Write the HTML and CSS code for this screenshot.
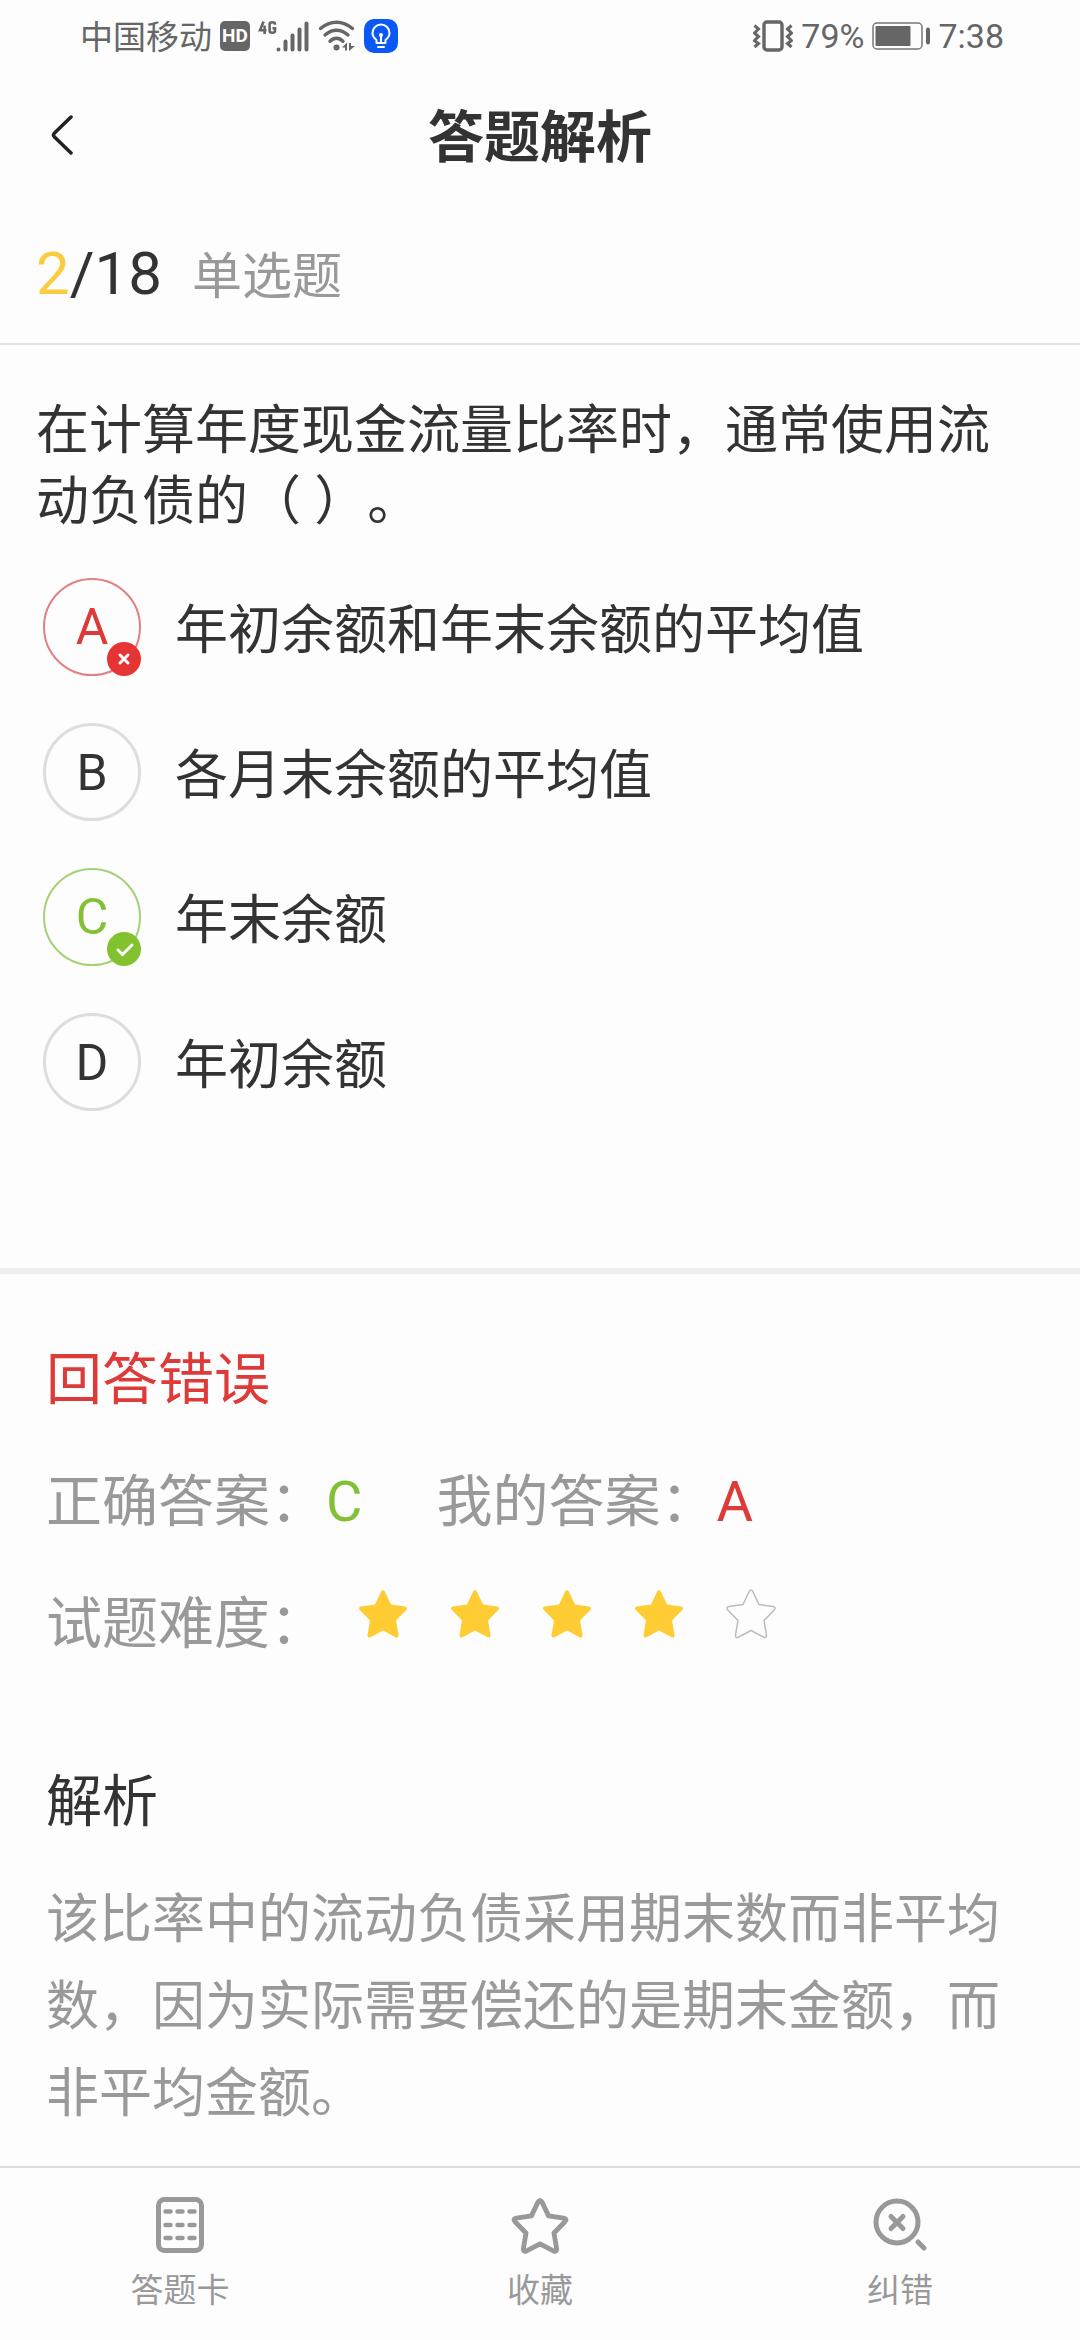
FILE: index.html
```html
<!DOCTYPE html>
<html lang="zh-CN">
<head>
<meta charset="utf-8">
<meta name="viewport" content="width=device-width, initial-scale=1">
<title>答题解析</title>
<link rel="stylesheet" href="styles.css">
</head>
<body>
<div class="app">
  <div class="status">
    <div class="status-group">
      <span class="carrier">中国移动</span>
      <span class="hd">HD</span>
      <svg class="signal" width="52" height="34" viewBox="0 0 52 34" aria-hidden="true">
        <g fill="none" stroke="#666" stroke-width="2.6">
          <path d="M5.6 2.5 2 11.3h6.5M6.6 6.500v8.500"/>
          <path d="M17 5.800V5q0-1.700-2.700-1.700T11.600 5v7q0 1.700 2.700 1.700T17 12V9.300h-2.500"/>
        </g>
        <g stroke="#666" stroke-width="4" stroke-linecap="round">
          <path d="M20.500 30.500v0M27.500 30.500v-8M34.500 30.500v-14M41.500 30.500v-20M48.500 30.500v-26"/>
        </g>
      </svg>
      <svg class="wifi" width="38" height="34" viewBox="0 0 38 34" aria-hidden="true">
        <g fill="none" stroke="#666" stroke-width="3.400" stroke-linecap="round">
          <path d="M2.500 9.500Q10 3.200 18.500 3.200T34.500 9.500"/>
          <path d="M7 16q5.500-4.800 11.500-4.800T30 16"/>
          <path d="M12 22.200q3-3 6.500-3t6.500 3"/>
        </g>
        <circle cx="18.500" cy="28.500" r="3" fill="#666"/>
        <path d="M24 28.500l5-5v8h-2v-3zM31 24v8l6-5h-4v-3z" fill="#666"/>
      </svg>
      <svg class="bulb" width="34" height="34" viewBox="0 0 34 34" aria-hidden="true">
        <rect width="34" height="34" rx="10" fill="#0a59f7"/>
        <g fill="none" stroke="#fff" stroke-width="2" stroke-linecap="round" stroke-linejoin="round">
          <path d="M12.500 24v-3q-4-3-4-7a8.500 8.500 0 0 1 17 0q0 4-4 7v3z"/>
          <path d="M17 24v-7M14 28h6"/>
        </g>
        <circle cx="17" cy="16" r="2" fill="#fff"/>
      </svg>
    </div>
    <div class="status-group">
      <svg class="vibrate" width="40" height="32" viewBox="0 0 40 32" aria-hidden="true">
        <g fill="none" stroke="#666">
          <rect x="11" y="2" width="18" height="28" rx="3" stroke-width="3.400"/>
          <path d="M1.500 5.500l4 3.500-4 4 4 3.500-4 4 4 3-4 3.500M38.500 5.500l-4 3.500 4 4-4 3.500 4 4-4 3 4 3.500" stroke-width="3"/>
        </g>
      </svg>
      <span class="percent">79%</span>
      <svg class="battery" width="58" height="28" viewBox="0 0 58 28" aria-hidden="true">
        <rect x="1" y="1" width="49" height="26" rx="4" fill="none" stroke="#777" stroke-width="1.500"/>
        <rect x="3.500" y="4" width="35" height="20" rx="1" fill="#666"/>
        <rect x="54" y="5.500" width="4" height="17" rx="2" fill="#666"/>
      </svg>
      <span class="clock">7:38</span>
    </div>
  </div>

  <header class="header">
    <button class="back" type="button" aria-label="返回">
      <svg width="24" height="40" viewBox="0 0 24 40" aria-hidden="true">
        <path d="M21 2 4.500 18q-2 2 0 4L21 38" fill="none" stroke="#222" stroke-width="3.500" stroke-linecap="round"/>
      </svg>
    </button>
    <h1 class="title">答题解析</h1>
  </header>

  <div class="progress">
    <span class="count"><span class="current">2</span>/18</span>
    <span class="kind">单选题</span>
  </div>

  <main class="content">
    <section class="question">
      <p class="stem">在计算年度现金流量比率时，通常使用流动负债的（ ）。</p>
      <div class="options">
        <button class="option" type="button">
          <span class="mark wrong">A
            <svg class="badge" width="34" height="34" viewBox="0 0 34 34" aria-hidden="true"><circle cx="17" cy="17" r="17" fill="#e63333"/><path d="M13 13l8 8M21 13l-8 8" stroke="#fff" stroke-width="3" stroke-linecap="round"/></svg>
          </span>
          <span class="option-text">年初余额和年末余额的平均值</span>
        </button>
        <button class="option" type="button">
          <span class="mark">B</span>
          <span class="option-text">各月末余额的平均值</span>
        </button>
        <button class="option" type="button">
          <span class="mark right">C
            <svg class="badge" width="34" height="34" viewBox="0 0 34 34" aria-hidden="true"><circle cx="17" cy="17" r="17" fill="#82c22f"/><path d="M11 18l4.500 4.500L25 13" fill="none" stroke="#fff" stroke-width="3" stroke-linecap="round"/></svg>
          </span>
          <span class="option-text">年末余额</span>
        </button>
        <button class="option" type="button">
          <span class="mark">D</span>
          <span class="option-text">年初余额</span>
        </button>
      </div>
    </section>

    <section class="result">
      <h2 class="verdict">回答错误</h2>
      <div class="answers">
        <span>正确答案：<span class="good">C</span></span>
        <span>我的答案：<span class="bad">A</span></span>
      </div>
      <div class="difficulty">
        <span>试题难度：</span>
        <span class="stars" role="img" aria-label="4 / 5">
          <svg class="star" viewBox="0 0 50 50"><use href="#star"/></svg>
          <svg class="star" viewBox="0 0 50 50"><use href="#star"/></svg>
          <svg class="star" viewBox="0 0 50 50"><use href="#star"/></svg>
          <svg class="star" viewBox="0 0 50 50"><use href="#star"/></svg>
          <svg class="star empty" viewBox="0 0 50 50"><use href="#star"/></svg>
        </span>
      </div>
      <h2 class="subtitle">解析</h2>
      <p class="explain">该比率中的流动负债采用期末数而非平均数，因为实际需要偿还的是期末金额，而非平均金额。</p>
    </section>
  </main>

  <nav class="tabs">
    <button class="tab" type="button">
      <svg width="58" height="58" viewBox="0 0 58 58" fill="none" stroke="#999" aria-hidden="true">
        <rect x="7.500" y="3.500" width="43" height="51" rx="6" stroke-width="5"/>
        <path d="M14.500 15.500h5M26.500 15.500h5M38.500 15.500h5M14.500 29h5M26.500 29h5M38.500 29h5M14.500 42h5M26.500 42h5M38.500 42h5" stroke-width="4.500" stroke-linecap="round"/>
      </svg>
      <span>答题卡</span>
    </button>
    <button class="tab" type="button">
      <svg width="58" height="58" viewBox="-2 -3 54 54" fill="none" stroke="#999" stroke-width="4.500" aria-hidden="true"><use href="#star" width="50" height="50"/></svg>
      <span>收藏</span>
    </button>
    <button class="tab" type="button">
      <svg width="58" height="58" viewBox="0 0 58 58" fill="none" stroke="#999" stroke-width="5" stroke-linecap="round" aria-hidden="true">
        <circle cx="26" cy="26" r="21"/>
        <path d="M20 20.500l12 12M32 20.500l-12 12M47 46l6 6"/>
      </svg>
      <span>纠错</span>
    </button>
  </nav>
</div>
<svg class="defs" width="0" height="0" aria-hidden="true">
  <symbol id="star" viewBox="0 0 50 50" overflow="visible">
    <path d="M23.200 2.500q1.800-3 3.600 0l6.200 13 14 2q3.500.8 1.200 3.500L38 31.500l2.500 14.500q.2 3.500-3 2.200L25 41.500 12.500 48.200q-3.200 1.300-3-2.200L12 31.500 1.800 21Q-.5 18.300 3 17.500l14-2z" stroke-linejoin="round"/>
  </symbol>
</svg>
</body>
</html>
```
FILE: styles.css
```css
* {
  box-sizing: border-box;
}

body {
  margin: 0;
  background: #fdfdfd;
  color: #333;
  font-family: Roboto, "Noto Sans CJK SC", sans-serif;
  font-size: 53px;
  text-spacing-trim: space-all;
}

h1, h2, p {
  margin: 0;
}

button {
  padding: 0;
  border: 0;
  background: none;
  color: inherit;
  font: inherit;
}

svg {
  display: block;
  flex: none;
}

.app {
  display: flex;
  flex-direction: column;
  min-height: 100vh;
}

.defs {
  position: absolute;
}

/* Status bar */
.status {
  display: flex;
  justify-content: space-between;
  height: 72px;
  padding: 0 76px 0 80px;
  color: #666;
  font-size: 34px;
  line-height: 74px;
}

.status-group {
  display: flex;
  align-items: center;
  gap: 8px;
}

.carrier {
  padding-top: 4px;
  font-size: 33px;
}

.hd {
  width: 30px;
  height: 30px;
  border-radius: 5px;
  background: #666;
  color: #fff;
  font-size: 19px;
  font-weight: 700;
  line-height: 30px;
  text-align: center;
}

/* Title bar */
.header {
  display: grid;
  grid-template-columns: 120px 1fr 120px;
  align-items: center;
  height: 126px;
}

.back {
  padding-left: 50px;
}

.title {
  padding-top: 6px;
  font-size: 56px;
  font-weight: 700;
  line-height: 80px;
  text-align: center;
}

.progress {
  display: flex;
  align-items: baseline;
  gap: 30px;
  height: 147px;
  padding: 32px 36px 0;
  border-bottom: 2px solid #e2e2e2;
  line-height: 88px;
}

.count {
  font-size: 60px;
}

.current {
  color: #fbcc42;
}

.kind {
  color: #999;
  font-size: 50px;
}

/* Question */
.content {
  flex: 1;
}

.question {
  padding: 51px 42px 157px 36px;
  border-bottom: 6px solid #eee;
}

.stem {
  padding-right: 40px;
  line-height: 71px;
}

.options {
  display: flex;
  flex-direction: column;
  gap: 47px;
  padding: 40px 0 0 7px;
}

.option {
  display: flex;
  align-items: center;
  gap: 34px;
  line-height: 71px;
  text-align: left;
}

.option-text {
  padding-top: 8px;
}

.mark {
  position: relative;
  flex: none;
  width: 98px;
  height: 98px;
  border: 3px solid #ddd;
  border-radius: 50%;
  font-size: 50px;
  line-height: 95px;
  text-align: center;
}

.wrong {
  border: 2px solid #e08080;
  color: #dd3a38;
}

.right {
  border: 2px solid #a5d075;
  color: #82c036;
}

.badge {
  position: absolute;
  right: -2px;
  bottom: -2px;
}

/* Result */
.result {
  padding: 65px 46px 28px;
}

.verdict,
.subtitle {
  font-size: 56px;
  font-weight: 400;
  line-height: 82px;
}

.verdict,
.bad {
  color: #dd3a38;
}

.good {
  color: #82c036;
}

.answers,
.difficulty {
  display: flex;
  margin-top: 40px;
  color: #999;
  font-size: 56px;
  line-height: 82px;
}

.answers {
  gap: 74px;
}

.stars {
  display: flex;
  gap: 42px;
  padding: 6px 0 0 32px;
}

.star {
  width: 50px;
  height: 50px;
  fill: #ffcc33;
}

.empty {
  fill: none;
  stroke: #bbb;
  stroke-width: 1.5;
}

.subtitle {
  margin-top: 96px;
}

.explain {
  margin-top: 34px;
  color: #999;
  line-height: 87px;
}

/* Bottom bar */
.tabs {
  display: grid;
  grid-template-columns: repeat(3, 1fr);
  height: 174px;
  border-top: 2px solid #ddd;
}

.tab {
  display: flex;
  flex-direction: column;
  align-items: center;
  gap: 12px;
  padding-top: 28px;
  color: #999;
  font-size: 33px;
  line-height: 50px;
}
```
